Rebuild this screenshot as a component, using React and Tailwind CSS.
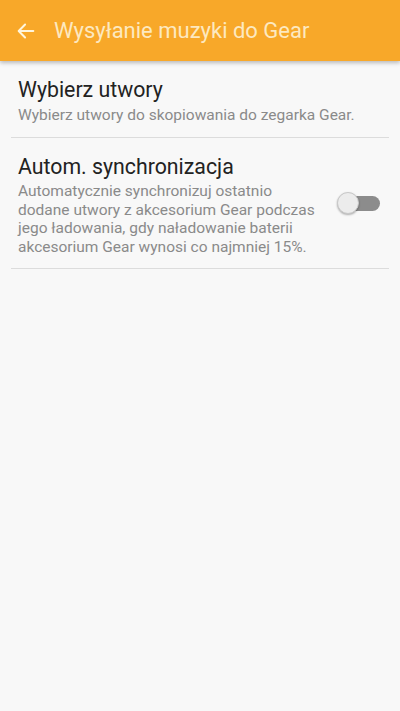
export default function App() {
  return (
    <div className="w-[400px] h-[711px] bg-[#f8f8f8] overflow-hidden" style={{ fontFamily: "Roboto, 'Noto Sans', sans-serif" }}>
      <div className="h-[61px] bg-[#f8a829] flex items-center shadow-[0_2px_4px_rgba(0,0,0,0.25)] relative z-10">
        <div className="w-[54px] flex justify-center pr-[2px]">
          <svg width="22" height="22" viewBox="0 0 24 24" fill="none" stroke="#fff5dc" strokeWidth="2.2" strokeLinecap="round" strokeLinejoin="round">
            <path d="M20 12H4.5" />
            <path d="M11 5l-7 7 7 7" />
          </svg>
        </div>
        <div className="text-[22px] text-[#fde9c0] leading-none">Wysyłanie muzyki do Gear</div>
      </div>
      <div className="px-[11px]">
        <div className="px-[7px] pt-[17px] pb-[12px] border-b border-[#dcdcdc]">
          <div className="text-[21.3px] leading-[24px] text-[#222]">Wybierz utwory</div>
          <div className="text-[15.5px] leading-[20px] text-[#8a8a8a] mt-[3px]">Wybierz utwory do skopiowania do zegarka Gear.</div>
        </div>
        <div className="px-[7px] pt-[17px] pb-[11px] border-b border-[#dcdcdc] flex items-center">
          <div className="flex-1">
            <div className="text-[21.3px] leading-[24px] text-[#222]">Autom. synchronizacja</div>
            <div className="text-[15.5px] leading-[18.7px] text-[#8a8a8a] mt-[3px] w-[302px]">Automatycznie synchronizuj ostatnio dodane utwory z akcesorium Gear podczas jego ładowania, gdy naładowanie baterii akcesorium Gear wynosi co najmniej 15%.</div>
          </div>
          <div className="relative w-[43px] h-[24px] mr-[2px] mt-[-6px]">
            <div className="absolute left-[4px] right-0 top-[5px] h-[15px] rounded-full bg-[#8c8c8c]" />
            <div className="absolute left-0 top-[1px] w-[22px] h-[22px] rounded-full bg-[#ececec] border border-[#c8c8c8] shadow-[0_1px_2px_rgba(0,0,0,0.3)]" />
          </div>
        </div>
      </div>
    </div>
  );
}
